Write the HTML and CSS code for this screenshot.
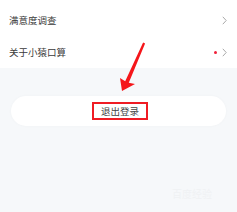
FILE: index.html
```html
<!DOCTYPE html>
<html lang="zh">
<head>
<meta charset="utf-8">
<link rel="stylesheet" href="styles.css">
</head>
<body>
<div class="page">
  <div class="card">
    <div class="row">
      <span class="label">满意度调查</span>
      <span class="right">
        <svg class="chev" width="5" height="9" viewBox="0 0 5 9"><path d="M0.8 0.8 L4.2 4.5 L0.8 8.2" fill="none" stroke="#a9a9a9" stroke-width="1"/></svg>
      </span>
    </div>
    <div class="row">
      <span class="label">关于小猿口算</span>
      <span class="right">
        <span class="dot"></span>
        <svg class="chev" width="5" height="9" viewBox="0 0 5 9"><path d="M0.8 0.8 L4.2 4.5 L0.8 8.2" fill="none" stroke="#a9a9a9" stroke-width="1"/></svg>
      </span>
    </div>
  </div>
  <div class="logout">
    <span class="logout-text">退出登录</span>
  </div>
  <svg class="arrow" width="40" height="60" viewBox="0 0 40 60">
    <polygon points="28.1,4.6 30.1,5.4 13.8,44.8 20,46 7,53 5,40 10.2,43.2" fill="#f5161a"/>
  </svg>
  <div class="watermark">百度经验</div>
</div>
</body>
</html>
```
FILE: styles.css
```css
html, body {
  margin: 0;
  padding: 0;
}
body {
  background: #f6f8fa;
  font-family: "Noto Sans CJK SC", "Noto Sans", sans-serif;
  width: 237px;
  height: 212px;
  overflow: hidden;
}
.page {
  position: relative;
  height: 212px;
}
.card {
  background: #ffffff;
  padding-top: 4px;
}
.row {
  height: 32px;
  display: flex;
  align-items: center;
  justify-content: space-between;
  padding: 0 10px 0 9px;
}
.label {
  font-size: 9.5px;
  color: #3a3a3a;
}
.right {
  display: flex;
  align-items: center;
  gap: 5px;
}
.chev {
  display: block;
}
.dot {
  width: 3px;
  height: 3px;
  border-radius: 50%;
  background: #f0203a;
}
.logout {
  margin: 28px 11px 0;
  height: 30px;
  border-radius: 15px;
  background: #ffffff;
  box-shadow: 0 0 3px rgba(0, 0, 0, 0.03);
  display: flex;
  align-items: center;
  justify-content: center;
}
.logout-text {
  font-size: 9.5px;
  color: #444444;
  border: 2px solid #ef1c24;
  padding: 0 7px;
  height: 14px;
  line-height: 14px;
  margin-left: 3px;
}
.arrow {
  position: absolute;
  left: 115px;
  top: 38px;
}
.watermark {
  position: absolute;
  left: 172px;
  top: 186px;
  font-size: 10px;
  color: #f0f2f4;
}
```
